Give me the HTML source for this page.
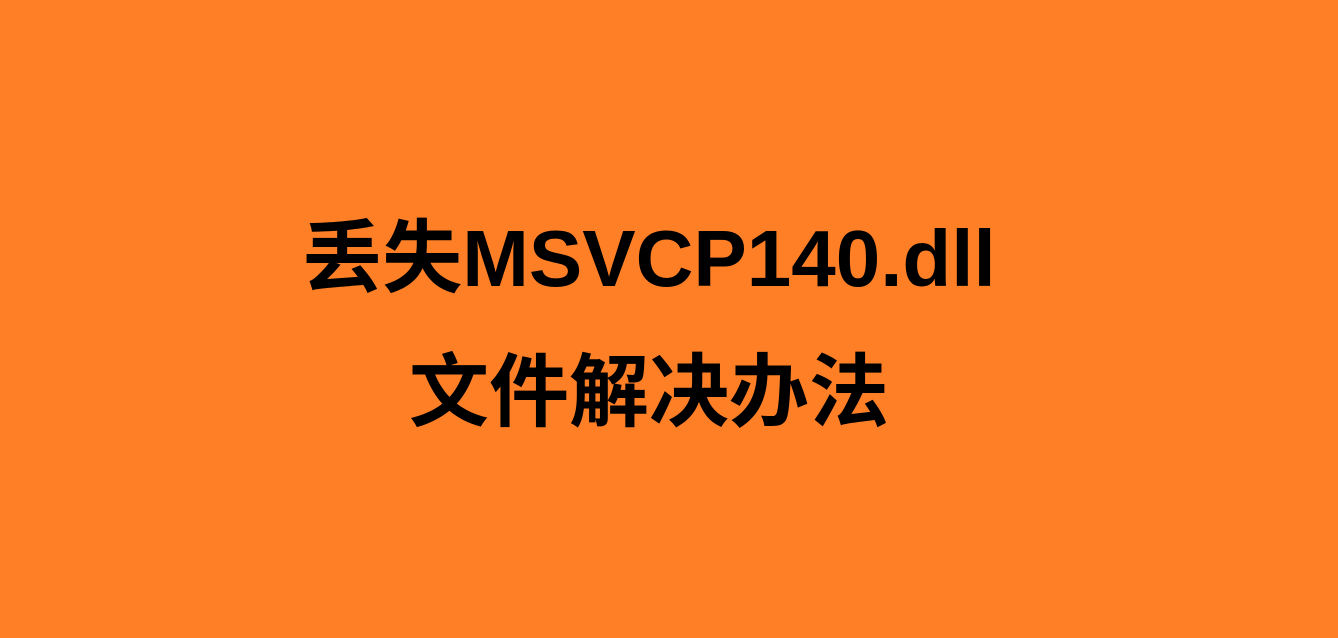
<!DOCTYPE html>
<html><head><meta charset="utf-8"><style>
html,body{margin:0;padding:0}
body{width:1338px;height:638px;background:#FF7F27;position:relative;overflow:hidden;font-family:"Liberation Sans","Noto Sans CJK SC",sans-serif;font-weight:bold;color:#000}
.l{position:absolute;width:1338px;text-align:center;font-size:80px;line-height:100px;white-space:nowrap}
</style></head><body>
<div class="l" style="top:209px;left:-20px">丢失MSVCP140.dll</div>
<div class="l" style="top:343px;left:-20px">文件解决办法</div>
</body></html>
